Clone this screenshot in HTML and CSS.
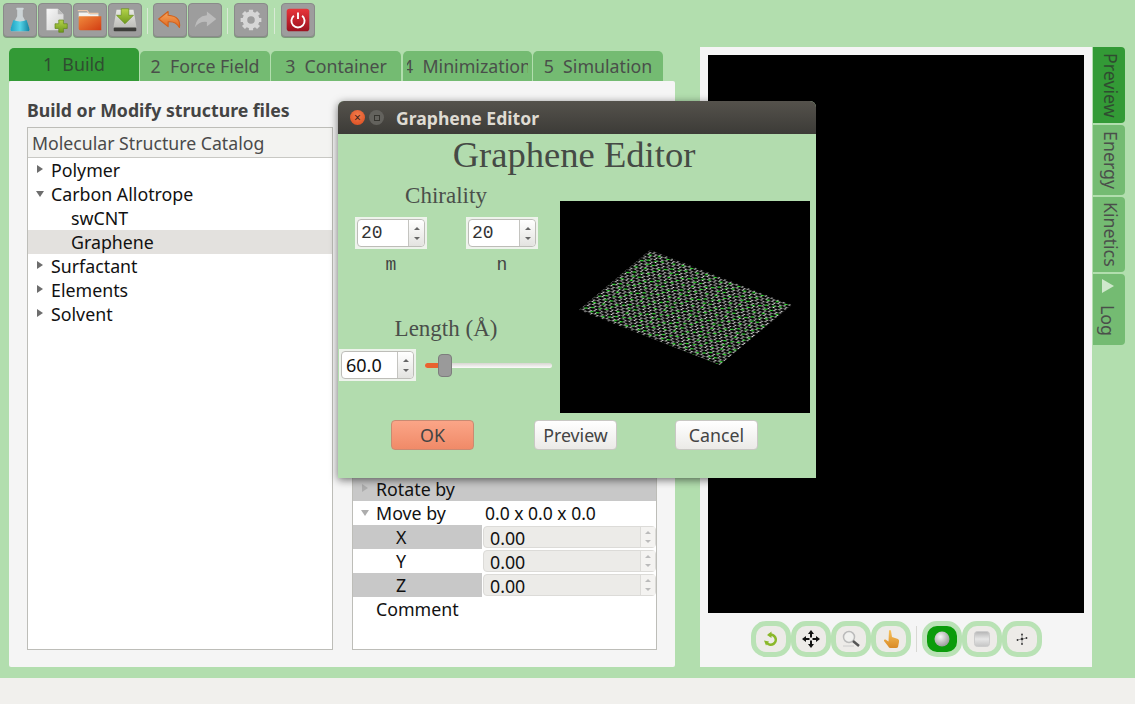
FILE: index.html
```html
<!DOCTYPE html>
<html lang="en">
<head>
<meta charset="utf-8">
<title>Graphene Editor</title>
<link rel="stylesheet" href="styles.css">
</head>
<body>
<svg class="defs" width="0" height="0" aria-hidden="true">
  <defs>
    <linearGradient id="gFlask" x1="0" y1="0" x2="1" y2="0"><stop offset="0" stop-color="#1c9fc0"/><stop offset=".5" stop-color="#55d4e8"/><stop offset="1" stop-color="#12809f"/></linearGradient>
    <linearGradient id="gPaper" x1="0" y1="0" x2="1" y2="1"><stop offset="0" stop-color="#f8f8f8"/><stop offset="1" stop-color="#cfcfcf"/></linearGradient>
    <linearGradient id="gPlus" x1="0" y1="0" x2="0" y2="1"><stop offset="0" stop-color="#b5d34a"/><stop offset="1" stop-color="#6f9a1c"/></linearGradient>
    <linearGradient id="gFolder" x1="0" y1="0" x2="1" y2="1"><stop offset="0" stop-color="#f08a3c"/><stop offset="1" stop-color="#d23c12"/></linearGradient>
    <linearGradient id="gDrive" x1="0" y1="0" x2="0" y2="1"><stop offset="0" stop-color="#e8e8e4"/><stop offset="1" stop-color="#b8b8b4"/></linearGradient>
    <linearGradient id="gUndo" x1="0" y1="0" x2="0" y2="1"><stop offset="0" stop-color="#f6a860"/><stop offset="1" stop-color="#e0661e"/></linearGradient>
    <linearGradient id="gPower" x1="0" y1="0" x2="0" y2="1"><stop offset="0" stop-color="#e8353a"/><stop offset="1" stop-color="#9c1220"/></linearGradient>
    <radialGradient id="gBall" cx=".4" cy=".35" r=".75"><stop offset="0" stop-color="#f6f6f6"/><stop offset="1" stop-color="#8e8e8e"/></radialGradient>
    <linearGradient id="gBox" x1="0" y1="0" x2="0" y2="1"><stop offset="0" stop-color="#b4b4b4"/><stop offset=".5" stop-color="#e6e6e6"/><stop offset="1" stop-color="#c4c4c4"/></linearGradient>
    <linearGradient id="gHand" x1="0" y1="0" x2="0" y2="1"><stop offset="0" stop-color="#f8c25c"/><stop offset="1" stop-color="#d98a26"/></linearGradient>
    <g id="hexCell" transform="translate(2.5 1.5)">
      <path class="bond" d="M0 1.67 5 0 10 1.67M0 1.67V5M5 6.67 0 5M5 6.67 10 5M5 6.67V10"/>
      <circle class="atom" cx="0" cy="1.67" r="1.2"/>
      <circle class="atom" cx="5" cy="0" r="1.2"/>
      <circle class="atom" cx="0" cy="5" r="1.2"/>
      <circle class="atom" cx="5" cy="6.67" r="1.2"/>
    </g>
    <pattern id="lattice" patternUnits="userSpaceOnUse" width="40" height="30" patternTransform="matrix(.59 .225 -.465 .395 90 50)">
      <use href="#hexCell" x="-10" y="-10"/><use href="#hexCell" x="0" y="-10"/><use href="#hexCell" x="10" y="-10"/><use href="#hexCell" x="20" y="-10"/><use href="#hexCell" x="30" y="-10"/>
      <use href="#hexCell" x="-10" y="0"/><use href="#hexCell" x="0" y="0"/><use href="#hexCell" x="10" y="0"/><use href="#hexCell" x="20" y="0"/><use href="#hexCell" x="30" y="0"/>
      <use href="#hexCell" x="-10" y="10"/><use href="#hexCell" x="0" y="10"/><use href="#hexCell" x="10" y="10"/><use href="#hexCell" x="20" y="10"/><use href="#hexCell" x="30" y="10"/>
      <use href="#hexCell" x="-10" y="20"/><use href="#hexCell" x="0" y="20"/><use href="#hexCell" x="10" y="20"/><use href="#hexCell" x="20" y="20"/><use href="#hexCell" x="30" y="20"/>
      <path class="greenbond" d="M4 8l3.500-2M17 5l3.500-2M28 12l3.500-2M9 18l3.500-2M22 24l3.500-2M34 27l3.500-2M31 4l3.500-2M14 26l3.500-2M19 15l3.500-2M2 23l3.500-2"/>
    </pattern>
  </defs>
</svg>

<header class="toolbar">
  <button class="tool"><svg viewBox="0 0 34 34"><path d="M14 5h6v8l7 13q1 3-2 3H9q-3 0-2-3l7-13z" fill="#dfeaec" opacity=".7"/><path d="M10 17q7 3 14 0l3 9q1 3-2 3H9q-3 0-2-3z" fill="url(#gFlask)"/><rect x="13" y="4" width="8" height="2" rx="1" fill="#cfd8da"/></svg></button>
  <button class="tool"><svg viewBox="0 0 34 34"><path d="M8 5h12l6 6v17H8z" fill="url(#gPaper)"/><path d="M20 5l6 6h-6z" fill="#bdbdbd"/><path d="M21 17h5v4h4v5h-4v4h-5v-4h-4v-5h4z" fill="url(#gPlus)" stroke="#5e8417" stroke-width=".7"/></svg></button>
  <button class="tool"><svg viewBox="0 0 34 34"><path d="M5 9h10l2 2h9v3H5z" fill="#f3f3f0"/><path d="M4 7h10l2 3h10" fill="none" stroke="#ebc9ab" stroke-width="1.200"/><path d="M5 13h24v15H7q-2 0-2-2z" fill="url(#gFolder)"/></svg></button>
  <button class="tool"><svg viewBox="0 0 34 34"><path d="M8 6h18l3 17v4H5v-4z" fill="url(#gDrive)"/><rect x="5" y="25" width="24" height="4" rx="1" fill="#3d3d3a"/><path d="M13 5h8v7h5l-9 9-9-9h5z" fill="url(#gPlus)" stroke="#648c1a" stroke-width=".7"/></svg></button>
  <span class="vsep"></span>
  <button class="tool"><svg viewBox="0 0 34 34"><path d="M15 8 5 16l10 8v-5q8-1 12 6 2-12-12-13z" fill="url(#gUndo)" stroke="#d2601a" stroke-width="1.200" stroke-linejoin="round"/></svg></button>
  <button class="tool"><svg viewBox="0 0 34 34"><path d="M19 8l10 8-10 8v-5q-8-1-13 6 2-12 13-13z" fill="#bcbcbc"/></svg></button>
  <span class="vsep sep-b"></span>
  <button class="tool"><svg viewBox="0 0 34 34"><path d="M17 6v4M17 24v4M6 17h4M24 17h4M9 9l3 3M22 22l3 3M25 9l-3 3M12 22l-3 3" stroke="#d6d6d6" stroke-width="4.500"/><circle cx="17" cy="17" r="6.500" fill="none" stroke="#d6d6d6" stroke-width="5"/></svg></button>
  <span class="vsep sep-c"></span>
  <button class="tool"><svg viewBox="0 0 34 34"><rect x="5" y="5" width="24" height="24" rx="3" fill="url(#gPower)"/><path d="M12.600 12.500a7 7 0 1 0 8.800 0" fill="none" stroke="#fff" stroke-width="2"/><path d="M17 9v7" stroke="#fff" stroke-width="2"/></svg></button>
</header>

<main class="workspace">
  <section class="left">
    <nav class="tabs">
      <span class="tab active">1&nbsp; Build</span>
      <span class="tab">2&nbsp; Force Field</span>
      <span class="tab">3&nbsp; Container</span>
      <span class="tab clipped"><span class="clip-in">4&nbsp; Minimization</span></span>
      <span class="tab">5&nbsp; Simulation</span>
    </nav>
    <div class="panel">
      <h2 class="panel-title">Build or Modify structure files</h2>
      <div class="columns">
        <div class="box catalog">
          <div class="box-head">Molecular Structure Catalog</div>
          <div class="row"><i class="tri closed"></i>Polymer</div>
          <div class="row"><i class="tri open"></i>Carbon Allotrope</div>
          <div class="row sub">swCNT</div>
          <div class="row sub selected">Graphene</div>
          <div class="row"><i class="tri closed"></i>Surfactant</div>
          <div class="row"><i class="tri closed"></i>Elements</div>
          <div class="row"><i class="tri closed"></i>Solvent</div>
        </div>
        <div class="box props">
          <div class="prow shade"><i class="tri closed light"></i><span class="pname">Rotate by</span></div>
          <div class="prow"><i class="tri open light"></i><span class="pname">Move by</span><span class="pval">0.0 x 0.0 x 0.0</span></div>
          <div class="prow"><span class="pcell shade">X</span><span class="dis-spin">0.00<b class="dis-arrows"><u></u><u></u></b></span></div>
          <div class="prow"><span class="pcell">Y</span><span class="dis-spin">0.00<b class="dis-arrows"><u></u><u></u></b></span></div>
          <div class="prow"><span class="pcell shade">Z</span><span class="dis-spin">0.00<b class="dis-arrows"><u></u><u></u></b></span></div>
          <div class="prow"><span class="pname">Comment</span></div>
        </div>
      </div>
    </div>
  </section>

  <section class="viewer">
    <div class="canvas"></div>
    <div class="viewbar">
      <button class="vbtn"><svg viewBox="0 0 24 24"><path d="M10 8a5 5 0 1 1-2 8" fill="none" stroke="#8ab82a" stroke-width="2.600"/><path d="M12.500 4.500 8 8l4.500 3z M5 13.500l5 1-3 4z" fill="#8ab82a"/></svg></button>
      <button class="vbtn"><svg viewBox="0 0 24 24"><path d="M12 3l3 4h-2v3.500h-2V7H9zM12 21l3-4h-2v-3.500h-2V17H9zM3 12l4-3v2h3.500v2H7v2zM21 12l-4-3v2h-3.500v2H17v2z" fill="#111"/></svg></button>
      <button class="vbtn"><svg viewBox="0 0 24 24"><circle cx="10" cy="10" r="5.500" fill="#f1f1ef" stroke="#bbb" stroke-width="1.500"/><path d="M14 14l6 5" stroke="#555" stroke-width="2.500"/><path d="M4 19h11" stroke="#ccc"/></svg></button>
      <button class="vbtn"><svg viewBox="0 0 24 24"><path d="M10 3.500q1.500-1 2 .5l1 6 6 2q1.500 1 1 3l-1 5q-.5 1-2 1h-6q-1 0-2-2l-4-5q-.5-2 1.500-1.500l3 2z" fill="url(#gHand)"/></svg></button>
      <span class="vsep short"></span>
      <button class="vbtn on"><svg viewBox="0 0 24 24"><circle cx="12" cy="12" r="7.500" fill="url(#gBall)"/></svg></button>
      <button class="vbtn"><svg viewBox="0 0 24 24"><rect x="4.500" y="4.500" width="15" height="15" rx="3" fill="url(#gBox)" stroke="#ccc"/></svg></button>
      <button class="vbtn"><svg viewBox="0 0 24 24"><path d="M12 7v10M7 13l10-2" stroke="#888" stroke-width=".8"/><circle cx="12" cy="12" r="1.300" fill="#333"/><circle cx="12" cy="7.500" r=".9" fill="#333"/><circle cx="12" cy="17" r=".9" fill="#333"/><circle cx="7.500" cy="13" r=".9" fill="#333"/><circle cx="16.500" cy="11" r=".9" fill="#333"/></svg></button>
    </div>
  </section>

  <nav class="side-tabs">
    <span class="stab active s1">Preview</span>
    <span class="stab s2">Energy</span>
    <span class="stab s3">Kinetics</span>
    <span class="stab s4"><i class="play"></i>Log</span>
  </nav>
</main>

<footer class="statusbar"></footer>

<div class="dialog">
  <div class="titlebar">
    <span class="wbtn close">×</span>
    <span class="wbtn max"><em></em></span>
    <span class="dtitle">Graphene Editor</span>
  </div>
  <h1 class="dheading">Graphene Editor</h1>
  <div class="dbody">
    <div class="controls">
      <div class="serif-label chir">Chirality</div>
      <div class="spin-row">
        <div class="field"><span class="spin"><span class="spin-in mono">20<span class="arrows"><u></u><u></u></span></span></span><span class="mono-label">m</span></div>
        <div class="field"><span class="spin"><span class="spin-in mono">20<span class="arrows"><u></u><u></u></span></span></span><span class="mono-label">n</span></div>
      </div>
      <div class="serif-label len">Length (Å)</div>
      <div class="len-row">
        <span class="spin wide"><span class="spin-in">60.0<span class="arrows"><u></u><u></u></span></span></span>
        <div class="slider"><span class="fill"></span><span class="handle"></span></div>
      </div>
    </div>
    <svg class="molecule" viewBox="0 0 250 212">
      <polygon points="90,49 232,104 160,164 19,109" fill="url(#lattice)"/>
    </svg>
  </div>
  <div class="actions">
    <button class="dbtn ok">OK</button>
    <button class="dbtn mid">Preview</button>
    <button class="dbtn">Cancel</button>
  </div>
</div>
</body>
</html>
```
FILE: styles.css
```css
* { box-sizing: border-box; }
html, body { height: 100%; }
body {
  margin: 0;
  width: 1135px;
  height: 704px;
  overflow: hidden;
  position: relative;
  background: #b2deae;
  font-family: "Noto Sans", sans-serif;
  font-size: 17.8px;
  color: #111;
}
.defs { position: absolute; }
button { font: inherit; padding: 0; }

/* top toolbar */
.toolbar {
  height: 47px;
  padding: 3px 0 0 3px;
  display: flex;
  align-items: flex-start;
  gap: 1px;
}
.tool {
  width: 34px;
  height: 34px;
  background: #9d9d9d;
  border: 1px solid #8a8a8a;
  border-radius: 4px;
  box-shadow: 0 1px 0 #7d9c7b;
  display: block;
}
.tool svg { display: block; width: 32px; height: 32px; }
.vsep {
  width: 1px;
  height: 26px;
  margin: 5px 4px 0;
  background: #d9ead6;
}
.vsep.sep-b { margin-right: 5px; }
.vsep.sep-c { margin-left: 5px; margin-right: 5px; }

/* workspace */
.workspace { display: flex; height: 620px; padding-left: 9px; }
.left { width: 666px; display: flex; flex-direction: column; }
.tabs { display: flex; height: 34px; align-items: flex-end; gap: 1px; }
.tab {
  width: 130px;
  height: 30px;
  background: #74bb72;
  border-radius: 5px 5px 0 0;
  color: #4a4f4a;
  font-size: 17.8px;
  line-height: 31px;
  text-align: center;
  white-space: nowrap;
  overflow: hidden;
}
.tab.active { height: 33px; background: #339a36; line-height: 32px; color: #2f4d30; }
.tab.clipped { width: 129px; margin-left: 1px; padding-left: 4px; text-align: left; }
.clip-in { display: block; width: 121px; overflow: hidden; text-indent: -4px; }
.panel {
  flex: 1;
  background: #f5f5f5;
  padding: 18px 18px 17px;
  border-radius: 2px;
  display: flex;
  flex-direction: column;
}
.panel-title {
  margin: 1px 0 6px;
  font-size: 17.7px;
  line-height: 21px;
  font-weight: 700;
  color: #444;
}
.columns { flex: 1; display: flex; gap: 19px; }
.box { width: 306px; background: #fff; border: 1px solid #bdbdb8; }
.box.props { width: 305px; padding-top: 349px; }
.box-head {
  height: 30px;
  line-height: 30px;
  padding-left: 4px;
  background: #f3f3f1;
  border-bottom: 1px solid #c8c8c4;
  color: #4a4a4a;
  font-size: 17.7px;
}
.row {
  height: 24px;
  line-height: 24px;
  padding-left: 23px;
  position: relative;
}
.row.sub { padding-left: 43px; }
.row.selected { background: #e3e1de; }
.tri { position: absolute; width: 0; height: 0; }
.tri.closed {
  left: 9px; top: 7px;
  border-left: 6px solid #6d6d6d;
  border-top: 4px solid transparent;
  border-bottom: 4px solid transparent;
}
.tri.open {
  left: 8px; top: 9px;
  border-top: 6px solid #6d6d6d;
  border-left: 4px solid transparent;
  border-right: 4px solid transparent;
}
.tri.light.closed { border-left-color: #adadad; }
.tri.light.open { border-top-color: #adadad; }

.prow { height: 24px; line-height: 24px; display: flex; position: relative; }
.prow.shade { background: #c8c8c8; }
.pname { padding-left: 23px; width: 132px; white-space: nowrap; }
.pval { font-size: 17.5px; white-space: nowrap; }
.pcell { width: 129px; padding-left: 43px; flex: none; }
.pcell.shade { background: #c8c8c8; }
.dis-spin {
  width: 174px;
  height: 22px;
  margin: 1px 0 0 1px;
  padding-left: 6px;
  line-height: 22px;
  background: #ecebe8;
  border: 1px solid #dcdbd8;
  border-radius: 4px;
  position: relative;
}
.dis-arrows {
  position: absolute;
  right: 0; top: 0; bottom: 0;
  width: 15px;
  border-left: 1px solid #dcdbd8;
  background: #f4f3f1;
  display: flex;
  flex-direction: column;
  align-items: center;
  justify-content: center;
  gap: 6px;
}
.dis-arrows u, .arrows u {
  width: 0; height: 0;
  border-left: 3px solid transparent;
  border-right: 3px solid transparent;
  border-bottom: 3px solid #bbb;
  display: block;
}
.dis-arrows u:last-child, .arrows u:last-child {
  border-bottom: 0;
  border-top: 3px solid #bbb;
}

/* viewer */
.viewer {
  width: 392px;
  margin-left: 25px;
  background: #f5f5f5;
  padding: 8px 8px 0;
  display: flex;
  flex-direction: column;
}
.canvas { height: 558px; background: #000; }
.viewbar {
  display: flex;
  justify-content: center;
  align-items: center;
  height: 36px;
  margin-top: 8px;
}
.vbtn {
  width: 40px;
  height: 36px;
  border: 5px solid #b9e2b5;
  border-radius: 15px;
  background: #edebe8;
  display: flex;
  align-items: center;
  justify-content: center;
}
.vbtn svg { width: 24px; height: 24px; }
.vbtn.on { background: #0b9c0b; border-color: #b9e2b5; }
.vsep.short { height: 26px; margin: 0 5px; background: #d8d8d4; }

.side-tabs { margin-left: 1px; width: 32px; display: flex; flex-direction: column; gap: 2px; }
.stab {
  width: 32px;
  background: #74bb72;
  border-radius: 0 4px 4px 0;
  writing-mode: vertical-rl;
  font-size: 17.8px;
  line-height: 28px;
  color: #4a4f4a;
  text-align: center;
  white-space: nowrap;
}
.stab.active { background: #339a36; color: #2f4d30; }
.s1 { height: 76px; }
.s2 { height: 70px; }
.s3 { height: 75px; }
.s4 { height: 71px; display: flex; align-items: center; justify-content: flex-start; padding: 5px 3px 0 0; gap: 12px; }
.play {
  width: 0; height: 0;
  margin-left: 1px;
  border-left: 12px solid #cfe8cc;
  border-top: 7px solid transparent;
  border-bottom: 7px solid transparent;
}

.statusbar { position: absolute; left: 0; right: 0; bottom: 0; height: 26px; background: #f1f0ed; }

/* dialog */
.dialog {
  position: absolute;
  left: 338px;
  top: 101px;
  width: 478px;
  height: 377px;
  background: #b2dcae;
  border-radius: 6px 6px 0 0;
  box-shadow: 0 2px 8px rgba(0,0,0,.55);
  display: flex;
  flex-direction: column;
}
.titlebar {
  height: 33px;
  flex: none;
  background: linear-gradient(#55524c, #3c3b37);
  border-radius: 6px 6px 0 0;
  display: flex;
  align-items: center;
  padding-left: 12px;
  gap: 4px;
}
.wbtn {
  width: 15px; height: 15px;
  border-radius: 50%;
  font-size: 12px;
  line-height: 15px;
  text-align: center;
  color: #40231a;
  display: flex;
  align-items: center;
  justify-content: center;
}
.wbtn.close { background: radial-gradient(circle at 50% 35%, #f47b4c, #d84a1c); }
.wbtn.max { background: #63625d; }
.wbtn.max em { width: 6px; height: 6px; border: 1px solid #35342f; display: block; }
.dtitle { margin-left: 8px; color: #dfdbd2; font-weight: 700; font-size: 17.6px; }
.dheading {
  margin: 0;
  height: 43px;
  flex: none;
  text-align: center;
  font: 400 36.6px/42px "Liberation Serif", serif;
  color: #454a45;
  padding-right: 6px;
}
.dbody { height: 212px; margin-top: 24px; flex: none; position: relative; display: flex; }
.controls { width: 222px; position: relative; flex: none; }
.serif-label {
  font: 400 23px/28px "Liberation Serif", serif;
  color: #4a4f4a;
  text-align: center;
  width: 216px;
}
.chir { margin-top: -19px; }
.len { margin-top: 40px; }
.spin-row { display: flex; padding-left: 17px; gap: 39px; margin-top: 7px; }
.field { display: flex; flex-direction: column; align-items: center; width: 72px; }
.spin {
  display: block;
  width: 72px;
  height: 32px;
  background: #eef3ec;
  padding: 2px;
  font-size: 18px;
}
.spin-in {
  display: block;
  height: 28px;
  background: #fff;
  border: 1px solid #bdbdb8;
  border-radius: 4px;
  position: relative;
  padding-left: 4px;
  line-height: 26px;
}
.spin-in.mono { font-family: "Liberation Mono", monospace; color: #333; padding-left: 3px; }
.spin.wide { width: 77px; color: #111; }
.arrows {
  position: absolute;
  right: 0; top: 0; bottom: 0;
  width: 16px;
  border-left: 1px solid #c4c4c0;
  background: linear-gradient(#fff, #e3e3e0);
  display: flex;
  flex-direction: column;
  align-items: center;
  justify-content: center;
  gap: 7px;
  border-radius: 0 4px 4px 0;
}
.arrows u { border-bottom-color: #666; }
.arrows u:last-child { border-top-color: #666; }
.mono-label {
  font: 400 18px/20px "Liberation Mono", monospace;
  color: #444;
  margin-top: 6px;
}
.len-row { display: flex; align-items: center; margin-top: 6px; padding-left: 1px; gap: 9px; }
.slider { width: 127px; height: 5px; background: linear-gradient(#d8d6d2, #fbfbfa); border-radius: 3px; position: relative; }
.fill { position: absolute; left: 0; top: 0; width: 15px; height: 5px; background: #e8632f; border-radius: 3px; }
.handle {
  position: absolute;
  left: 13px; top: -9px;
  width: 14px; height: 23px;
  background: #9a9a9a;
  border: 1px solid #7d7d7d;
  border-radius: 4px;
}
.molecule { width: 250px; height: 212px; background: #000; display: block; flex: none; }
.bond { fill: none; stroke: #7c7c7c; stroke-width: 1.1; }
.atom { fill: #f4f4f4; }
.greenbond { fill: none; stroke: #22e822; stroke-width: 2.2; }
.actions { display: flex; padding: 7px 58px 0 53px; justify-content: space-between; }
.dbtn {
  width: 83px;
  height: 30px;
  background: linear-gradient(#ffffff, #ebeae7);
  border: 1px solid #c9c8c4;
  border-radius: 4px;
  color: #444;
  font-size: 17.8px;
}
.dbtn.mid { margin: 0 -1px 0 1px; }
.dbtn.ok { background: linear-gradient(#fba587, #f08a68); border-color: #c98a72; }
```
